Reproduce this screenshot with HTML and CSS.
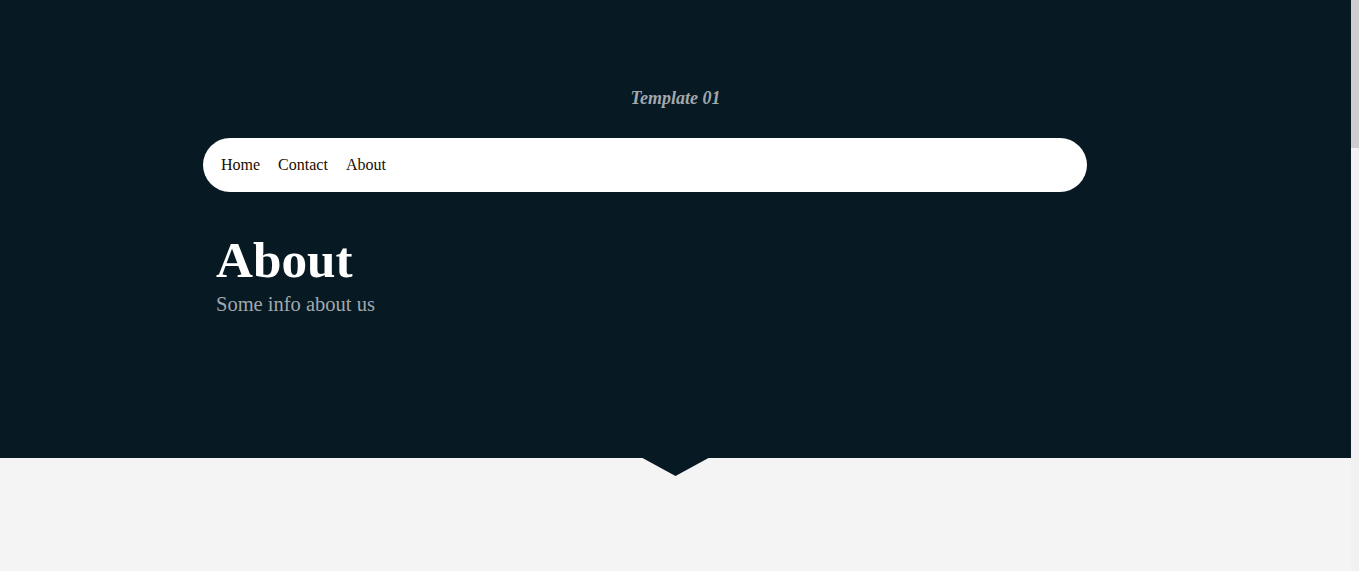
FILE: index.html
```html
<!DOCTYPE html>
<html lang="en">
<head>
<meta charset="utf-8">
<title>About - Template 01</title>
<link rel="stylesheet" href="styles.css">
</head>
<body>
<div class="page">
  <header class="hero">
    <p class="brand">Template 01</p>
    <nav class="navbar">
      <a href="#" class="nav-link">Home</a>
      <a href="#" class="nav-link">Contact</a>
      <a href="#" class="nav-link">About</a>
    </nav>
    <div class="hero-text">
      <h1 class="hero-title">About</h1>
      <p class="hero-sub">Some info about us</p>
    </div>
  </header>
  <main class="content"></main>
</div>
<div class="scrollbar" aria-hidden="true"><div class="scrollbar-thumb"></div></div>
</body>
</html>
```
FILE: styles.css
```css
html, body {
  margin: 0;
  padding: 0;
}
body {
  display: flex;
  height: 100vh;
  overflow: hidden;
  background: #f4f4f4;
  font-family: "Liberation Serif", "Times New Roman", serif;
}
.page {
  flex: 1;
  min-width: 0;
  overflow: hidden;
}
.scrollbar {
  width: 8px;
  flex: none;
  background: #f1f1f1;
}
.scrollbar-thumb {
  height: 148px;
  background: #cdcdcd;
}
.hero {
  position: relative;
  background: #071923;
  height: 458px;
  box-sizing: border-box;
  padding-top: 88px;
}
.hero::after {
  content: "";
  position: absolute;
  left: 50%;
  bottom: -18px;
  width: 66px;
  height: 18px;
  margin-left: -33px;
  background: #071923;
  clip-path: polygon(0 0, 100% 0, 50% 100%);
}
.brand {
  margin: 0;
  text-align: center;
  font-size: 18px;
  font-weight: bold;
  font-style: italic;
  color: #a1a8ad;
  line-height: 21px;
}
.navbar {
  margin: 29px 0 0 203px;
  width: 884px;
  height: 54px;
  background: #fff;
  border-radius: 27px;
  display: flex;
  align-items: center;
  gap: 18px;
  padding-left: 18px;
  box-sizing: border-box;
}
.nav-link {
  color: #1a0d00;
  text-decoration: none;
  font-size: 16px;
}
.hero-text {
  padding-left: 216px;
  margin-top: 42px;
}
.hero-title {
  margin: 0;
  font-size: 51.2px;
  line-height: 52px;
  font-weight: bold;
  color: #ffffff;
}
.hero-sub {
  margin: 8px 0 0;
  font-size: 20.5px;
  line-height: 20px;
  color: #a1a8ad;
}
.content {
  height: 113px;
}
```
